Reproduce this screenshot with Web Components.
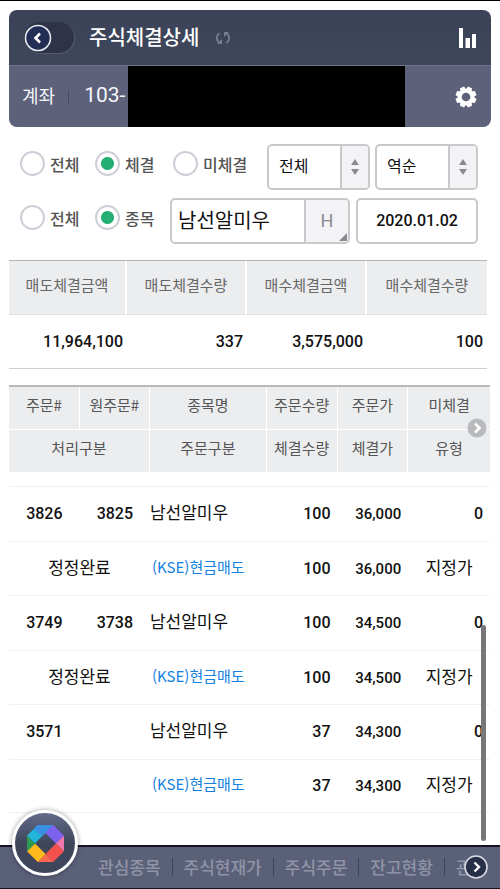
<!DOCTYPE html>
<html lang="ko">
<head>
<meta charset="utf-8">
<meta name="viewport" content="width=device-width, initial-scale=1">
<title>주식체결상세</title>
<style>
  body { margin: 0; background: #fff; font-family: "Noto Sans CJK KR", sans-serif; color: #111; --num: Roboto, "Noto Sans CJK KR", sans-serif; }
</style>
</head>
<body>
<trade-app></trade-app>
<script>
const define = (name, html, setup) => {
  const template = document.createElement('template');
  template.innerHTML = '<style>*{box-sizing:border-box}button,input,select{font:inherit;color:inherit;margin:0}button{border:0;padding:0;background:none;cursor:pointer}</style>' + html;
  customElements.define(name, class extends HTMLElement {
    constructor() {
      super();
      this.attachShadow({ mode: 'open' }).append(template.content.cloneNode(true));
      if (setup) setup(this.shadowRoot);
    }
  });
};

define('title-bar', `
<style>
  :host { display: flex; align-items: center; height: 55px; padding: 0 14px 0 15px; background: linear-gradient(#3b4258, #3e475a); color: #fff; }
  .back { width: 50px; height: 31px; border-radius: 16px; background: #2e3347; box-shadow: 1px 1px 1px #555a70; display: flex; align-items: center; }
  h1 { margin: 0 16px 0 15px; padding-bottom: 2px; font-size: 20px; line-height: 30px; font-weight: 500; }
  .chart { margin-left: auto; }
  button, svg { display: block; }
</style>
<button class="back" aria-label="뒤로"><svg width="28" height="28" viewBox="0 0 28 28"><circle cx="14" cy="14" r="12.5" fill="#222e54" stroke="#e6e8f0" stroke-width="1.6"/><path d="M16 9.5 11.500 14 16 18.500" fill="none" stroke="#fff" stroke-width="2.600"/></svg></button>
<h1><slot></slot></h1>
<button aria-label="새로고침"><svg width="16" height="16" viewBox="0 0 16 16"><path d="M4.500 3C1 5.500 1 10.500 4.500 12.500M11.500 13C15 10.500 15 5.500 11.500 3.500" fill="none" stroke="#777d8e" stroke-width="1.800"/><path d="M2 14H7V9zM14 2H9V7z" fill="#777d8e"/></svg></button>
<button class="chart" aria-label="차트"><svg width="18" height="20" viewBox="0 0 18 20" fill="#fff"><path d="M0 0h4v20H0zM6.500 10H11v10H6.500zM13 6h4v14h-4z"/></svg></button>
`);

define('account-bar', `
<style>
  :host { display: flex; align-items: center; height: 62px; padding-left: 13px; background: #5d6179; border-top: 1px solid #6f7388; color: #f4f5fa; }
  .name { font-size: 18px; line-height: 28px; padding-bottom: 4px; }
  .line { width: 1px; height: 14px; margin: 0 15px 0 13px; background: #484c63; }
  .no { font: 400 21px/28px var(--num); padding-bottom: 4px; }
  .mask { flex: 1; align-self: stretch; margin-left: 3px; background: #000; }
  button { width: 86px; padding-left: 50px; }
  svg { display: block; }
</style>
<span class="name">계좌</span><span class="line"></span><span class="no"><slot></slot></span><span class="mask"></span>
<button aria-label="설정"><svg width="22" height="22" viewBox="-11 -11 22 22"><g fill="#fff"><circle r="8"/><g id="t"></g></g><circle r="4.300" fill="#5d6179"/></svg></button>
`, root => {
  const g = root.querySelector('#t');
  for (let i = 0; i < 8; i++) {
    const p = document.createElementNS('http://www.w3.org/2000/svg', 'path');
    p.setAttribute('d', 'M-3.200-6.500-2.200-10.500H2.200L3.200-6.500z');
    p.setAttribute('transform', 'rotate(' + (i * 45 + 22.5) + ')');
    g.append(p);
  }
});

define('order-filter', `
<style>
  :host { display: grid; row-gap: 8px; padding: 17px 22px 0 20px; }
  .row { display: grid; }
  .a { grid-template-columns: 75px 78px 1fr 103px 108px; }
  .b { grid-template-columns: 75px 75px 1fr 122px; }
  .a .pick + .pick { margin-left: 5px; }
  label.r { display: flex; align-items: center; gap: 5px; height: 39px; font-size: 16px; line-height: 24px; font-weight: 500; color: #555; white-space: nowrap; }
  input[type=radio] { appearance: none; width: 25px; height: 25px; border: 2px solid #cdced6; border-radius: 50%; background: #fff; }
  input[type=radio]:checked { background: radial-gradient(circle, #27ae74 6px, #fff 7px); }
  .box, .pick { display: flex; height: 46px; border: 2px solid #c9c9cb; border-radius: 5px; background: #fff; overflow: hidden; color: #111; }
  .pick { position: relative; }
  select { appearance: none; border: 0; width: 100%; padding: 0 34px 4px 10px; font-size: 16px; background: linear-gradient(#f3f3f5, #f3f3f5) right / 26px 100% no-repeat, linear-gradient(#c9c9cb, #c9c9cb) right 26px top / 2px 100% no-repeat; }
  .pick svg { position: absolute; right: 9px; top: 13px; pointer-events: none; }
  .stock { margin-right: 6px; }
  .box input { border: 0; width: 100%; min-width: 0; background: none; }
  .stock input { font-size: 20px; padding: 0 0 4px 6px; }
  .stock button { flex: 0 0 44px; position: relative; border-left: 2px solid #c9c9cb; background: #f3f3f5; font: 400 18px/24px var(--num); color: #8a8a8e; }
  .stock svg { position: absolute; right: 1px; bottom: 1px; }
  .date input { font: 500 16px/24px var(--num); text-align: center; }
</style>
<div class="row a">
  <label class="r"><input type="radio" name="state">전체</label>
  <label class="r"><input type="radio" name="state" checked>체결</label>
  <label class="r"><input type="radio" name="state">미체결</label>
  <div class="pick"><select aria-label="매매구분"><option>전체</option></select><svg width="8" height="16" viewBox="0 0 8 16" fill="#8a8a8e"><path d="M4 0 8 6H0zM4 16 8 10H0z"/></svg></div>
  <div class="pick"><select aria-label="정렬"><option>역순</option></select><svg width="8" height="16" viewBox="0 0 8 16" fill="#8a8a8e"><path d="M4 0 8 6H0zM4 16 8 10H0z"/></svg></div>
</div>
<div class="row b">
  <label class="r"><input type="radio" name="scope">전체</label>
  <label class="r"><input type="radio" name="scope" checked>종목</label>
  <div class="box stock"><input type="text" aria-label="종목" value="남선알미우"><button aria-label="H 종목 이력">H<svg width="8" height="8" viewBox="0 0 8 8"><path d="M8 0V8H0z" fill="#8a8a8e"/></svg></button></div>
  <div class="box date"><input type="text" aria-label="일자" value="2020.01.02"></div>
</div>
`);

define('trade-summary', `
<style>
  :host { display: block; padding: 16px 13px 0 9px; }
  table { width: 100%; table-layout: fixed; border-collapse: separate; border-spacing: 0; border-top: 1px solid #b4b4b6; border-bottom: 1px solid #cfcfd1; }
  th { height: 54px; padding: 0 0 6px; background: #ecedef; border-right: 2px solid #fff; border-bottom: 1px solid #e0e1e3; font-size: 15px; line-height: 22px; font-weight: 400; color: #666; }
  th:first-child { width: 118px; }
  th:last-child { border-right: 0; }
  td { height: 53px; padding: 0 4px 0 0; text-align: right; font: 500 16px/24px var(--num); }
</style>
<table>
  <thead><tr><th>매도체결금액</th><th>매도체결수량</th><th>매수체결금액</th><th>매수체결수량</th></tr></thead>
  <tbody><tr><td>11,964,100</td><td>337</td><td>3,575,000</td><td>100</td></tr></tbody>
</table>
`);

define('order-list', `
<style>
  :host { display: block; position: relative; padding: 16px 10px 0 9px; }
  table { width: 100%; table-layout: fixed; border-collapse: separate; border-spacing: 0; border-top: 2px solid #bcb9ba; }
  th { height: 42px; padding: 0 0 6px; background: #ecedef; border-right: 1px solid #fff; font-size: 15px; line-height: 22px; font-weight: 400; color: #555; }
  th:last-child { border-right: 0; }
  tr:first-child th { height: 43px; border-bottom: 1px solid #fff; }
  tbody::before { content: ""; display: table-row; height: 14px; }
  td { height: 55px; padding: 0; border-top: 1px solid #f1f1f1; font-size: 17px; line-height: 26px; text-align: center; white-space: nowrap; }
  tr:nth-child(even) td { height: 54px; }
  tbody tr:last-child td { border-bottom: 1px solid #f1f1f1; }
  .n { font: 500 16px/26px var(--num); }
  .q { text-align: right; padding-right: 7px; }
  .p { font-size: 15px; }
  .l { text-align: left; padding: 0 0 4px; }
  .k { font-size: 15px; color: #1482e0; padding-left: 2px; }
  .c { padding-bottom: 4px; }
  .more { position: absolute; right: 13px; top: 49px; }
  .thumb { position: absolute; right: 14px; top: 256px; width: 5px; height: 216px; border-radius: 3px; background: #777; }
  svg { display: block; }
</style>
<table>
  <colgroup><col style="width:14.700%"><col style="width:14.600%"><col style="width:24.300%"><col style="width:14.700%"><col style="width:14.700%"><col></colgroup>
  <thead>
    <tr><th>주문#</th><th>원주문#</th><th>종목명</th><th>주문수량</th><th>주문가</th><th>미체결</th></tr>
    <tr><th colspan="2">처리구분</th><th>주문구분</th><th>체결수량</th><th>체결가</th><th>유형</th></tr>
  </thead>
  <tbody></tbody>
</table>
<button class="more" aria-label="다음 항목"><svg width="20" height="20" viewBox="0 0 20 20"><circle cx="10" cy="10" r="9.500" fill="#b9babc"/><path d="M8 5.500 12.500 10 8 14.500" fill="none" stroke="#fff" stroke-width="2.600"/></svg></button>
<span class="thumb"></span>
`, root => {
  root.querySelector('tbody').innerHTML = [
    ['3826', '3825', '정정완료', '100', '36,000'],
    ['3749', '3738', '정정완료', '100', '34,500'],
    ['3571', '', '', '37', '34,300']
  ].map(([no, from, state, qty, price]) =>
    `<tr><td class="n">${no}</td><td class="n">${from}</td><td class="l">남선알미우</td><td class="n q">${qty}</td><td class="n q p">${price}</td><td class="n q">0</td></tr>
     <tr><td class="c" colspan="2">${state}</td><td class="l k">(KSE)현금매도</td><td class="n q">${qty}</td><td class="n q p">${price}</td><td class="c">지정가</td></tr>`).join('');
});

define('bottom-bar', `
<style>
  :host { display: block; position: relative; height: 44px; margin-top: auto; background: #5b6079; border-top: 2px solid #15131f; border-bottom: 1px solid #15131f; }
  nav { display: flex; align-items: center; height: 41px; padding: 0 0 2px 86px; overflow: hidden; }
  a { flex: none; padding: 0 11px; border-left: 1px solid #3d4160; font-size: 17px; line-height: 18px; font-weight: 500; color: #9094a6; text-decoration: none; }
  a:first-child { border-left-color: transparent; }
  .home { position: absolute; left: 12px; bottom: 12px; width: 66px; height: 66px; border: 3px solid #fff; border-radius: 50%; background: linear-gradient(#626b8a, #3f465c 50%); box-shadow: 0 0 5px #0006; display: grid; place-items: center; }
  .next { position: absolute; right: 12px; top: 8px; }
  svg { display: block; }
</style>
<nav><a href="#">관심종목</a><a href="#">주식현재가</a><a href="#">주식주문</a><a href="#">잔고현황</a><a href="#">관</a></nav>
<button class="home" aria-label="홈"><svg width="37" height="37" viewBox="0 0 110 110">
  <path fill="#22b5d8" d="M0 32 32 0 55 22 24 55z"/><path fill="#3b8fe3" d="M32 0H78L55 24 44 34 20 12z"/><path fill="#7d62f0" d="M78 0 110 32 86 55 55 24z"/>
  <path fill="#f277ae" d="M110 32V78L86 55z"/><path fill="#f4504c" d="M110 78 78 110 55 86 86 55z"/><path fill="#fb6a50" d="M78 110H32L55 86z"/>
  <path fill="#fdba1d" d="M32 110 0 78 24 55 55 86z"/><path fill="#2f9a50" d="M0 32V78L24 55z"/>
</svg></button>
<button class="next" aria-label="다음 메뉴"><svg width="24" height="24" viewBox="0 0 24 24"><circle cx="12" cy="12" r="11" fill="#272e48" stroke="#d9dbe4" stroke-width="1.600"/><path d="M10.500 7.500 15 12 10.500 16.500" fill="none" stroke="#fff" stroke-width="2.400"/></svg></button>
`);

define('trade-app', `
<style>
  :host { display: flex; flex-direction: column; min-height: 100vh; border-top: 1px solid #000; box-sizing: border-box; }
  header { margin: 9px 9px 0; border-radius: 8px; overflow: hidden; }
</style>
<header><title-bar>주식체결상세</title-bar><account-bar>103-</account-bar></header>
<order-filter></order-filter>
<trade-summary></trade-summary>
<order-list></order-list>
<bottom-bar></bottom-bar>
`);
</script>
</body>
</html>
